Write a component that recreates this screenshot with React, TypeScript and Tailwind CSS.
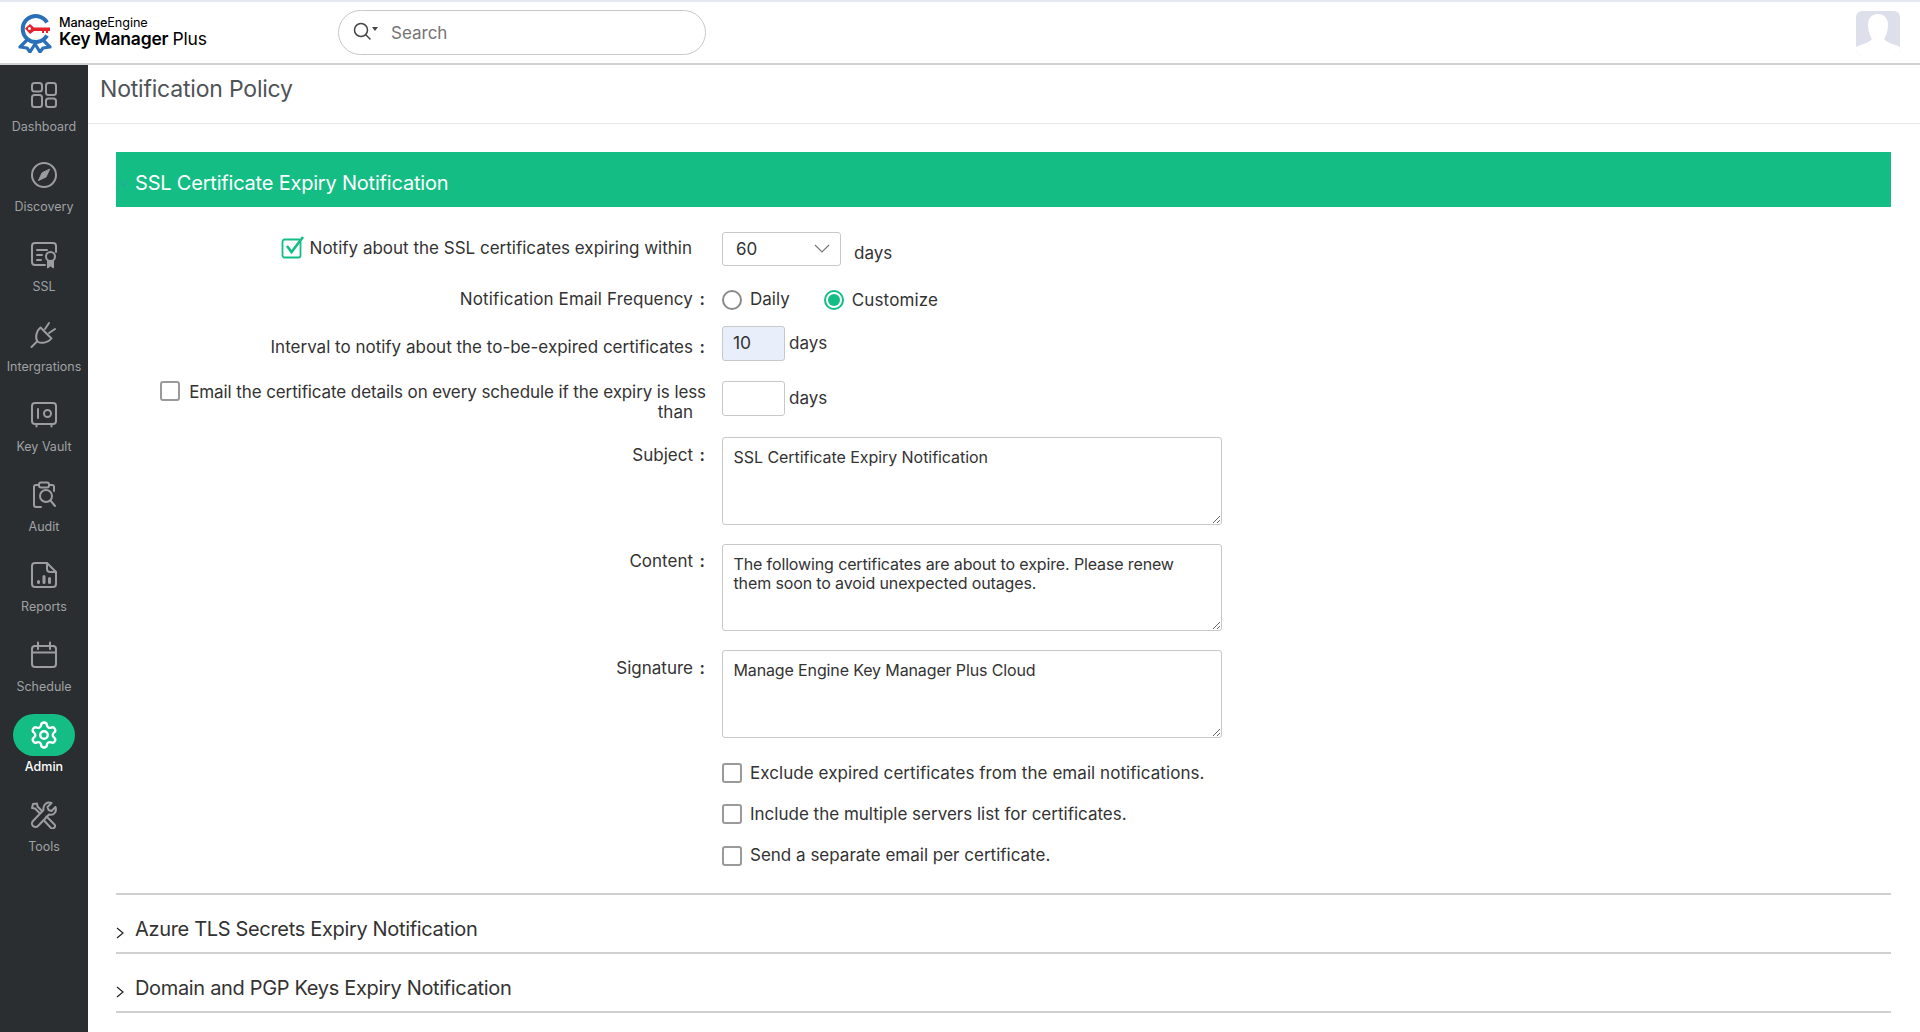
import React from "react";
import { Settings } from "lucide-react";

const font = "font-['Inter','Liberation_Sans',sans-serif]";

const Ic = ({ children }: { children: React.ReactNode }) => (
  <svg viewBox="0 0 28 28" width="28" height="28" fill="none" stroke="currentColor" strokeWidth="2" strokeLinecap="round" strokeLinejoin="round">
    {children}
  </svg>
);

const nav: { label: string; icon: React.ReactNode; active?: boolean }[] = [
  { label: "Dashboard", icon: <Ic><rect x="2" y="2" width="10" height="8.500" rx="2.500" /><rect x="16" y="2" width="10" height="12" rx="2.500" /><rect x="2" y="14" width="10" height="12" rx="2.500" /><rect x="16" y="17.500" width="10" height="8.500" rx="2.500" /></Ic> },
  { label: "Discovery", icon: <Ic><circle cx="14" cy="14" r="12" /><path d="M19.500 8.500 16 16 8.500 19.500 12 12Z" fill="currentColor" strokeWidth="1" /></Ic> },
  { label: "SSL", icon: <Ic><path d="M15 24H5a3 3 0 0 1-3-3V5a3 3 0 0 1 3-3h18a3 3 0 0 1 3 3v6" /><path d="M7 9h10M7 14h5M7 19h4" /><circle cx="20.500" cy="15.500" r="4.500" /><path d="M17.500 20v7l3-2 3 2v-7z" fill="currentColor" strokeWidth="1" /></Ic> },
  { label: "Intergrations", icon: <Ic><path d="M19 2l-4 6M25 8l-6 4" /><path d="M10.500 6.500 21.500 17.500C18 22 11 23 7.500 20.500 5 17 6 10 10.500 6.500Z" /><path d="M1.500 26l5-5" /></Ic> },
  { label: "Key Vault", icon: <Ic><rect x="2" y="2" width="24" height="21" rx="3" /><path d="M8 8v9" /><circle cx="17.500" cy="12.500" r="3.500" /><path d="M6.500 23v2.500M21.500 23v2.500" /></Ic> },
  { label: "Audit", icon: <Ic><path d="M9 4H6a2 2 0 0 0-2 2v18a2 2 0 0 0 2 2h5M19 4h3a2 2 0 0 1 2 2v4" /><rect x="9" y="1.500" width="10" height="5" rx="2" /><circle cx="16" cy="15" r="6" /><path d="M20.500 19.500 25 25" /></Ic> },
  { label: "Reports", icon: <Ic><path d="M17 2H5a3 3 0 0 0-3 3v18a3 3 0 0 0 3 3h18a3 3 0 0 0 3-3V11z" /><path d="M17 2v6a3 3 0 0 0 3 3h6" /><path d="M8.500 21.500v-1M14 21.500v-6M19.500 21.500v-4" strokeWidth="3" /></Ic> },
  { label: "Schedule", icon: <Ic><rect x="2" y="5" width="24" height="21" rx="3" /><path d="M2 11.500h24M8 1.500V8M20 1.500V8" /></Ic> },
  { label: "Admin", active: true, icon: <Settings size={30} strokeWidth={1.900} /> },
  { label: "Tools", icon: <Ic><path d="M25.500 6l-4 4-3-1-1-3 4-4c-4-1.500-9 1-8 7L3 20a3.500 3.500 0 0 0 5 5L19 13.500c5 1.500 8-3 6.500-7.500z" /><path d="M12 10 7.500 5.500 7 2.500 3 3 2 7l3 .500 4.500 4.500" /><path d="M16.500 15.500l8 8a2.500 2.500 0 0 1-3.500 3.500l-7-7.500" /></Ic> },
];

const Checkbox = ({ checked }: { checked?: boolean }) =>
  checked ? (
    <svg viewBox="0 0 24 24" width="24" height="24" fill="none" className="shrink-0">
      <rect x="1.500" y="4.500" width="18" height="18" rx="2" stroke="#13bd84" strokeWidth="1.800" />
      <path d="M6 11l4.500 6L22 2" stroke="#13bd84" strokeWidth="2.600" />
    </svg>
  ) : (
    <span className="block w-5 h-5 shrink-0 rounded-[3px] border-2 border-[#9a9a9a] bg-white" />
  );

const Radio = ({ on }: { on?: boolean }) =>
  on ? (
    <span className="flex w-5 h-5 items-center justify-center rounded-full border-2 border-[#13bd84]">
      <span className="block w-3 h-3 rounded-full bg-[#13bd84]" />
    </span>
  ) : (
    <span className="block w-5 h-5 rounded-full border-2 border-[#8a8a8a]" />
  );

const Label = ({ children }: { children: React.ReactNode }) => (
  <div className="w-[590px] shrink-0 text-right text-[17px] leading-[20px] text-[#333]">{children}</div>
);

const Colon = () => <span className="inline-block w-[13px] pr-[1px] text-[#333] font-semibold text-right">:</span>;

const AreaRow = ({ label, value, h, mt, pt, track }: { label: string; value: string; h: string; mt: string; pt: string; track: string }) => (
  <div className={`flex gap-4 ${mt}`}>
    <div className={pt}><Label>{label}<Colon /></Label></div>
    <textarea readOnly value={value} className={`w-[500px] ${h} ${track} rounded-[3px] border border-[#c8c8c8] pl-[10.500px] pr-6 pt-[10px] text-[16px] leading-[19px] text-[#333] outline-none`} />
  </div>
);

export default function App() {
  return (
    <div className={`${font} w-full h-[1032px] overflow-hidden bg-white flex flex-col`}>
      <header className="h-[65px] shrink-0 flex items-center border-t-2 border-t-[#e6e9f2] border-b-2 border-b-[#d2d2d2] bg-white">
        <div className="w-[338px] shrink-0 flex items-center pl-[18px] gap-[5px]">
          <svg viewBox="0 0 36 40" width="36" height="40">
            <path d="M29 9.500A13 13 0 1 0 29 22.500" fill="none" stroke="#2a6fb8" strokeWidth="4" />
            <path d="M9 27l-7 7 7 1 3 4 5-8 5 8 3-4 7-1-7-7" fill="none" stroke="#2a6fb8" strokeWidth="3.200" strokeLinejoin="round" />
            <path d="M7 15.500l5-4.500 4 3.500h16v3.500h-2v2h-2v-2h-2v2h-2v-2h-8l-4 3z" fill="#e4232b" />
            <circle cx="11.500" cy="15.500" r="1.500" fill="#fff" />
          </svg>
          <div className="flex flex-col text-black leading-none -mt-[2px]">
            <span className="text-[12.700px] font-medium tracking-[-0.1px] leading-[15px]">Manage<span className="font-normal">Engine</span></span>
            <span className="text-[17.500px] font-semibold tracking-[-0.2px] leading-[18px]">Key Manager <span className="font-normal">Plus</span></span>
          </div>
        </div>
        <div className="w-[368px] h-[45px] rounded-full border border-[#c8c8c8] flex items-center pl-[14px] gap-[13px]">
          <span className="flex items-center gap-[1px] text-[#444] -mt-[4px]">
            <svg viewBox="0 0 18 18" width="18" height="18" fill="none" stroke="currentColor" strokeWidth="1.500" strokeLinecap="round"><circle cx="8" cy="8" r="6.500" /><path d="M13 13l4 4" /></svg>
            <svg viewBox="0 0 6 4" width="6" height="4" className="mb-[3px]" fill="currentColor"><path d="M0 0h6L3 4z" /></svg>
          </span>
          <span className="text-[17px] text-[#757575] mt-[3px]">Search</span>
        </div>
        <div className="flex-1" />
        <div className="mr-[20px] w-[44px] h-[44px] rounded-md bg-[#dde0ea] overflow-hidden">
          <svg viewBox="0 0 44 44" width="44" height="44">
            <path d="M22 3c6 0 10 4 10 11 0 6-2 11-4 14 3 4 10 5 16 8v8H0v-8c6-3 13-4 16-8-2-3-4-8-4-14 0-7 4-11 10-11z" fill="#fff" />
          </svg>
        </div>
      </header>
      <div className="flex-1 flex min-h-0">
        <nav className="w-[88px] shrink-0 bg-[#2b2e31] flex flex-col pt-[7px]">
          {nav.map((n) => (
            <div key={n.label} className="h-[80px] flex flex-col items-center pt-[2px]">
              <div className={`w-[62px] h-[42px] rounded-full flex items-center justify-center ${n.active ? "bg-[#13bd84] text-white" : "text-[#9b9d9f]"}`}>{n.icon}</div>
              <span className={`mt-[2px] text-[12.500px] leading-[18px] ${n.active ? "text-white font-medium" : "text-[#9fa1a3]"}`}>{n.label}</span>
            </div>
          ))}
        </nav>
        <main className="flex-1 min-w-0 flex flex-col">
          <div className="h-[59px] shrink-0 border-b border-[#e9e9e9] pl-3 pt-[6px] text-[23px] tracking-[-0.2px] leading-[36px] text-[#4f5358]">Notification Policy</div>
          <div className="pl-[28px] pr-[29px] pt-[28px]">
            <div className="h-[55px] bg-[#13bd84] flex items-center text-[20px] tracking-[-0.2px] text-white">
              <svg viewBox="0 0 12 7" width="12" height="7" fill="none" stroke="#2f9da6" strokeWidth="1" className="ml-[1px] mr-[6px] mt-[8px]"><path d="M1 1l5 5 5-5" /></svg>
              <span className="pt-[7px]">SSL Certificate Expiry Notification</span>
            </div>

            <div className="flex gap-4 mt-[25px] h-[34px]">
              <div className="pt-[5px]"><Label><div className="flex justify-end items-center gap-[5px] pr-[14px] h-[22px]"><span className="-mt-[2px]"><Checkbox checked /></span><span>Notify about the SSL certificates expiring within</span></div></Label></div>
              <div className="w-[119px] h-[34px] rounded-[3px] border border-[#c8c8c8] flex items-center justify-between pl-[13px] pr-[10px] text-[17px] text-[#333]">
                <span className="mt-[1px]">60</span>
                <svg viewBox="0 0 16 10" width="16" height="10" fill="none" stroke="#777" strokeWidth="1.200"><path d="M1 1l7 7 7-7" /></svg>
              </div>
              <span className="-ml-[3px] text-[17px] pt-[11px] leading-[20px] text-[#333]">days</span>
            </div>

            <div className="flex gap-4 mt-[19px] h-[29px]">
              <div className="pt-[4px]"><Label><span className="tracking-[0.12px]">Notification Email Frequency</span><Colon /></Label></div>
              <div className="flex items-center gap-2 text-[17px] text-[#333]">
                <Radio /><span className="mt-[1px]">Daily</span>
                <span className="w-[18px]" />
                <Radio on /><span className="mt-[3px] tracking-[0.15px]">Customize</span>
              </div>
            </div>

            <div className="flex gap-4 mt-[12px] h-[35px]">
              <div className="pt-[11px]"><Label>Interval to notify about the to-be-expired certificates<Colon /></Label></div>
              <div className="flex items-center gap-1 text-[17px] text-[#333]">
                <div className="w-[63px] h-[35px] rounded-[3px] border border-[#c8c8c8] bg-[#e8effb] pl-[10px] flex items-center text-[17.500px]">10</div>
                <span className="mt-[1px]">days</span>
              </div>
            </div>

            <div className="flex gap-4 mt-[20px] h-[35px]">
              <div className="relative pt-[1px]">
                <Label>
                  <span className="block tracking-[-0.1px]">Email the certificate details on every schedule if the expiry is less</span>
                  <span className="block pr-[13px]">than</span>
                </Label>
                <span className="absolute left-[44px] top-0"><Checkbox /></span>
              </div>
              <div className="flex items-center gap-1 text-[17px] text-[#333]">
                <div className="w-[63px] h-[35px] rounded-[3px] border border-[#c8c8c8] bg-white" />
                <span className="mt-[1px]">days</span>
              </div>
            </div>

            <AreaRow label="Subject" value="SSL Certificate Expiry Notification" h="h-[88px]" mt="mt-[21px]" pt="pt-[8px]" track="tracking-[-0.05px]" />
            <AreaRow label="Content" value="The following certificates are about to expire. Please renew them soon to avoid unexpected outages." h="h-[87px]" mt="mt-[19px]" pt="pt-[7px]" track="tracking-[-0.13px]" />
            <AreaRow label="Signature" value="Manage Engine Key Manager Plus Cloud" h="h-[88px]" mt="mt-[19px]" pt="pt-[8px]" track="tracking-[-0.13px]" />

            <div className="ml-[606px] mt-[24px] flex flex-col gap-[20px] text-[17px] leading-[22px] text-[#333]">
              <div className="flex items-center gap-2 -mb-[1px]"><Checkbox /><span className="tracking-[0.06px]">Exclude expired certificates from the email notifications.</span></div>
              <div className="flex items-center gap-2"><Checkbox /><span>Include the multiple servers list for certificates.</span></div>
              <div className="flex items-center gap-2"><Checkbox /><span className="-mt-[1px]">Send a separate email per certificate.</span></div>
            </div>

            <div className="mt-[27px] border-t-2 border-[#d0d0d0]">
              {["Azure TLS Secrets Expiry Notification", "Domain and PGP Keys Expiry Notification"].map((t) => (
                <div key={t} className="h-[59px] border-b-2 border-[#d0d0d0] flex items-center text-[20px] tracking-[-0.33px] text-[#333]">
                  <svg viewBox="0 0 8 12" width="8" height="12" className="mt-[18px] mr-[11px]" fill="none" stroke="#222" strokeWidth="1.200"><path d="M1 1l6 5-6 5" /></svg>
                  <span className="mt-[10px]">{t}</span>
                </div>
              ))}
            </div>
          </div>
        </main>
      </div>
    </div>
  );
}
